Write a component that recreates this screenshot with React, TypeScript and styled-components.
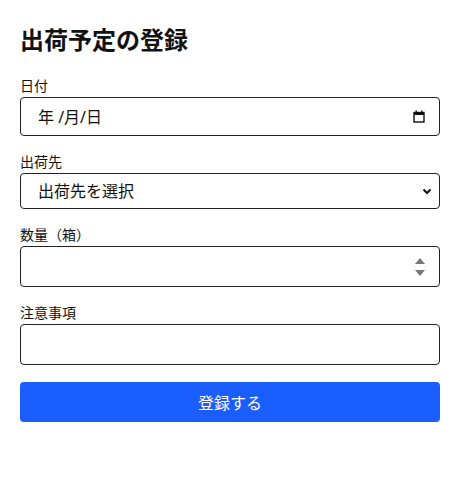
import React from "react";
import styled, { createGlobalStyle } from "styled-components";

const Global = createGlobalStyle`
  html, body { margin: 0; padding: 0; background: #fff; }
  body {
    font-family: "Noto Sans", "Noto Sans CJK JP", sans-serif;
    color: #111;
  }
`;

const Form = styled.form`
  display: flex;
  flex-direction: column;
  padding: 0 20px;
  width: 420px;
`;

const Title = styled.h2`
  margin: 24px 0 20px;
  font-size: 24px;
  font-weight: 700;
  line-height: 32px;
  color: #111;
`;

const Field = styled.div`
  display: flex;
  flex-direction: column;
  margin-bottom: 16px;
`;

const Label = styled.label`
  font-size: 14px;
  line-height: 19px;
  margin-bottom: 2px;
  color: #111;
`;

const Box = styled.div<{ $h: number }>`
  box-sizing: border-box;
  height: ${(p) => p.$h}px;
  border: 1px solid #222;
  border-radius: 4px;
  display: flex;
  align-items: center;
  padding: 0 14px 0 17px;
  font-size: 16px;
  color: #111;
  background: #fff;
`;

const BoxText = styled.span`
  flex: 1;
  line-height: 20px;
`;

const Button = styled.button`
  box-sizing: border-box;
  height: 40px;
  margin-top: 1px;
  border: none;
  border-radius: 4px;
  background: #1a5eff;
  color: #fff;
  font-family: "Noto Sans", "Noto Sans CJK JP", sans-serif;
  font-size: 16px;
`;

const Spin = styled.div`
  display: flex;
  flex-direction: column;
  gap: 6px;
  align-items: center;
`;

export default function App() {
  return (
    <>
      <Global />
      <Form onSubmit={(e) => e.preventDefault()}>
        <Title>出荷予定の登録</Title>
        <Field>
          <Label>日付</Label>
          <Box $h={39}>
            <BoxText>年 /月/日</BoxText>
            <svg width="12" height="13" viewBox="0 0 12 13">
              <rect x="1" y="2.5" width="10" height="9.5" fill="none" stroke="#111" strokeWidth="1.4" />
              <rect x="1" y="2" width="10" height="3" fill="#111" />
              <rect x="2.5" y="0.5" width="1.4" height="2" fill="#111" />
              <rect x="8.1" y="0.5" width="1.4" height="2" fill="#111" />
            </svg>
          </Box>
        </Field>
        <Field>
          <Label>出荷先</Label>
          <Box $h={36}>
            <BoxText>出荷先を選択</BoxText>
            <svg width="10" height="7" viewBox="0 0 10 7" style={{ marginRight: -7 }}>
              <path d="M1.5 1.5 L5 5 L8.5 1.5" fill="none" stroke="#111" strokeWidth="2" />
            </svg>
          </Box>
        </Field>
        <Field>
          <Label>数量（箱）</Label>
          <Box $h={41}>
            <BoxText />
            <Spin>
              <svg width="10" height="6" viewBox="0 0 10 6">
                <path d="M5 0 L10 6 L0 6 Z" fill="#777" />
              </svg>
              <svg width="10" height="6" viewBox="0 0 10 6">
                <path d="M0 0 L10 0 L5 6 Z" fill="#777" />
              </svg>
            </Spin>
          </Box>
        </Field>
        <Field>
          <Label>注意事項</Label>
          <Box $h={41}>
            <BoxText />
          </Box>
        </Field>
        <Button type="submit">登録する</Button>
      </Form>
    </>
  );
}
